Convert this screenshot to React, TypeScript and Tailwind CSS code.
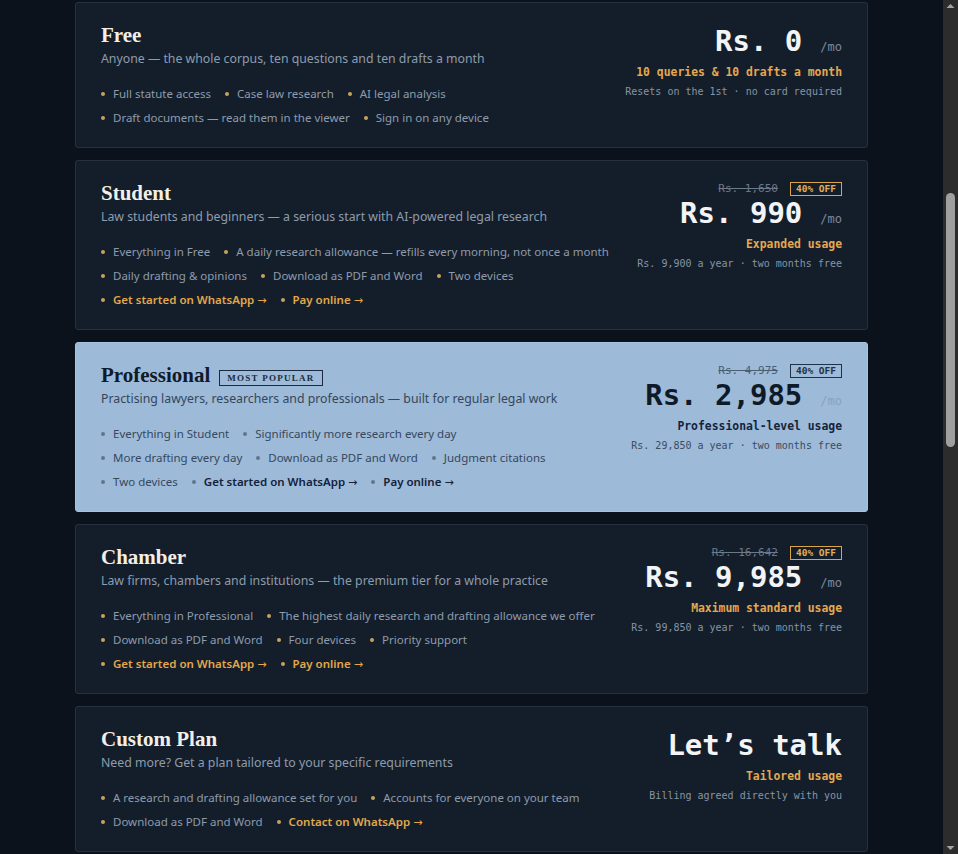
type Item = { text: string; link?: boolean }

interface Plan {
  name: string
  badge?: string
  desc: string
  rows: Item[][]
  strike?: string
  price: string
  perMonth?: boolean
  usage: string
  note: string
  featured?: boolean
}

const wa: Item = { text: 'Get started on WhatsApp', link: true }
const pay: Item = { text: 'Pay online', link: true }

// Plans as they appear on the pricing page, top to bottom.
const plans: Plan[] = [
  {
    name: 'Free',
    desc: 'Anyone — the whole corpus, ten questions and ten drafts a month',
    rows: [
      [{ text: 'Full statute access' }, { text: 'Case law research' }, { text: 'AI legal analysis' }],
      [{ text: 'Draft documents — read them in the viewer' }, { text: 'Sign in on any device' }],
    ],
    price: 'Rs. 0',
    perMonth: true,
    usage: '10 queries & 10 drafts a month',
    note: 'Resets on the 1st · no card required',
  },
  {
    name: 'Student',
    desc: 'Law students and beginners — a serious start with AI-powered legal research',
    rows: [
      [{ text: 'Everything in Free' }, { text: 'A daily research allowance — refills every morning, not once a month' }],
      [{ text: 'Daily drafting & opinions' }, { text: 'Download as PDF and Word' }, { text: 'Two devices' }],
      [wa, pay],
    ],
    strike: 'Rs. 1,650',
    price: 'Rs. 990',
    perMonth: true,
    usage: 'Expanded usage',
    note: 'Rs. 9,900 a year · two months free',
  },
  {
    name: 'Professional',
    badge: 'MOST POPULAR',
    featured: true,
    desc: 'Practising lawyers, researchers and professionals — built for regular legal work',
    rows: [
      [{ text: 'Everything in Student' }, { text: 'Significantly more research every day' }],
      [{ text: 'More drafting every day' }, { text: 'Download as PDF and Word' }, { text: 'Judgment citations' }],
      [{ text: 'Two devices' }, wa, pay],
    ],
    strike: 'Rs. 4,975',
    price: 'Rs. 2,985',
    perMonth: true,
    usage: 'Professional-level usage',
    note: 'Rs. 29,850 a year · two months free',
  },
  {
    name: 'Chamber',
    desc: 'Law firms, chambers and institutions — the premium tier for a whole practice',
    rows: [
      [{ text: 'Everything in Professional' }, { text: 'The highest daily research and drafting allowance we offer' }],
      [{ text: 'Download as PDF and Word' }, { text: 'Four devices' }, { text: 'Priority support' }],
      [wa, pay],
    ],
    strike: 'Rs. 16,642',
    price: 'Rs. 9,985',
    perMonth: true,
    usage: 'Maximum standard usage',
    note: 'Rs. 99,850 a year · two months free',
  },
  {
    name: 'Custom Plan',
    desc: 'Need more? Get a plan tailored to your specific requirements',
    rows: [
      [{ text: 'A research and drafting allowance set for you' }, { text: 'Accounts for everyone on your team' }],
      [{ text: 'Download as PDF and Word' }, { text: 'Contact on WhatsApp', link: true }],
    ],
    price: 'Let’s talk',
    usage: 'Tailored usage',
    note: 'Billing agreed directly with you',
  },
]

const serif = "font-['Liberation_Serif','Times_New_Roman',serif]"
const sans = "font-['Noto_Sans','Open_Sans',sans-serif]"
const mono = "font-['DejaVu_Sans_Mono','Liberation_Mono',monospace]"

function PlanCard({ plan }: { plan: Plan }) {
  const f = plan.featured
  return (
    <div
      className={`flex justify-between rounded-[3px] border px-[25px] pt-[19px] pb-5 ${
        f ? 'border-[#a9c3de] bg-[#9dbad8]' : 'border-[#253140] bg-[#141e2b]'
      }`}
    >
      {/* left: name, audience, feature rows */}
      <div className="flex flex-col">
        <div className="flex h-[28px] items-center gap-[9px]">
          <h2 className={`${serif} text-[21px] font-bold ${f ? 'text-[#0f1a2a]' : 'text-[#f3efe6]'}`}>{plan.name}</h2>
          {plan.badge && (
            <span
              className={`${serif} mt-[3px] border border-[#1b2a40] px-[7px] text-[9px] leading-[14px] font-bold tracking-[0.14em] text-[#1b2a40]`}
            >
              {plan.badge}
            </span>
          )}
        </div>
        <p className={`${sans} text-[12.3px] leading-[18px] ${f ? 'text-[#34465b]' : 'text-[#8e9cab]'}`}>{plan.desc}</p>
        <div className="mt-[17px] flex flex-col gap-[6px]">
          {plan.rows.map((row, i) => (
            <div key={i} className="flex h-[18px] items-center gap-x-[14px]">
              {row.map((it) => (
                <span key={it.text} className={`${sans} flex items-center gap-2 text-[11.5px] leading-[18px]`}>
                  <span className={`h-1 w-1 rounded-full ${f ? 'bg-[#627489]' : 'bg-[#c5a35e]'}`} />
                  {it.link ? (
                    <span className={`font-semibold ${f ? 'text-[#13213a]' : 'text-[#e1a84c]'}`}>
                      {it.text}{' '}
                      <span className="font-['DejaVu_Sans',sans-serif] text-[11px] leading-none font-normal">→</span>
                    </span>
                  ) : (
                    <span className={f ? 'text-[#36485d]' : 'text-[#8e9bab]'}>{it.text}</span>
                  )}
                </span>
              ))}
            </div>
          ))}
        </div>
      </div>

      {/* right: price block */}
      <div className={`${mono} flex flex-col items-end pt-[2px]`}>
        {plan.strike && (
          <div className="flex h-[14px] items-center gap-3">
            <span className={`text-[11px] line-through ${f ? 'text-[#4b5d72]' : 'text-[#6c7988]'}`}>{plan.strike}</span>
            <span
              className={`border px-[5px] text-[9.5px] leading-[12px] font-bold ${
                f ? 'border-[#223246] text-[#223246]' : 'border-[#d9a548] text-[#e3ad52]'
              }`}
            >
              40% OFF
            </span>
          </div>
        )}
        <div className="flex items-baseline">
          <span className={`text-[29px] leading-[34px] font-bold ${f ? 'text-[#0f1a29]' : 'text-[#f2f4f6]'}`}>
            {plan.price}
          </span>
          {plan.perMonth && (
            <span className={`ml-[18px] text-[12px] ${f ? 'text-[#87a3c1]' : 'text-[#7d8a9a]'}`}>/mo</span>
          )}
        </div>
        <span className={`mt-[7px] text-[11.4px] leading-[14px] font-bold ${f ? 'text-[#15243b]' : 'text-[#e4a94e]'}`}>
          {plan.usage}
        </span>
        <span className={`mt-[6px] text-[10px] leading-[14px] ${f ? 'text-[#3b4c60]' : 'text-[#8794a3]'}`}>{plan.note}</span>
      </div>
    </div>
  )
}

// Browser scrollbar as it appears in the screenshot (page scrolled partway down)
function Scrollbar() {
  return (
    <div className="flex h-full w-[15px] shrink-0 flex-col items-center bg-[#2c2c2c]">
      <svg width="15" height="12" viewBox="0 0 15 12" className="shrink-0">
        <path d="M3.5 8 L7.5 4 L11.5 8 Z" fill="#a3a3a3" />
      </svg>
      <div className="h-[181px] shrink-0" />
      <div className="h-[254px] w-[9px] shrink-0 rounded-[5px] bg-[#9f9f9f]" />
      <div className="flex-1" />
      <svg width="15" height="12" viewBox="0 0 15 12" className="shrink-0">
        <path d="M3.5 4 L7.5 8 L11.5 4 Z" fill="#a3a3a3" />
      </svg>
    </div>
  )
}

export default function App() {
  return (
    <div className="flex h-screen overflow-hidden bg-[#0c121b]">
      <div className="flex-1 overflow-hidden">
        <div className="mx-auto flex w-[793px] flex-col gap-3 pt-[2px]">
          {plans.map((p) => (
            <PlanCard key={p.name} plan={p} />
          ))}
        </div>
      </div>
      <Scrollbar />
    </div>
  )
}
